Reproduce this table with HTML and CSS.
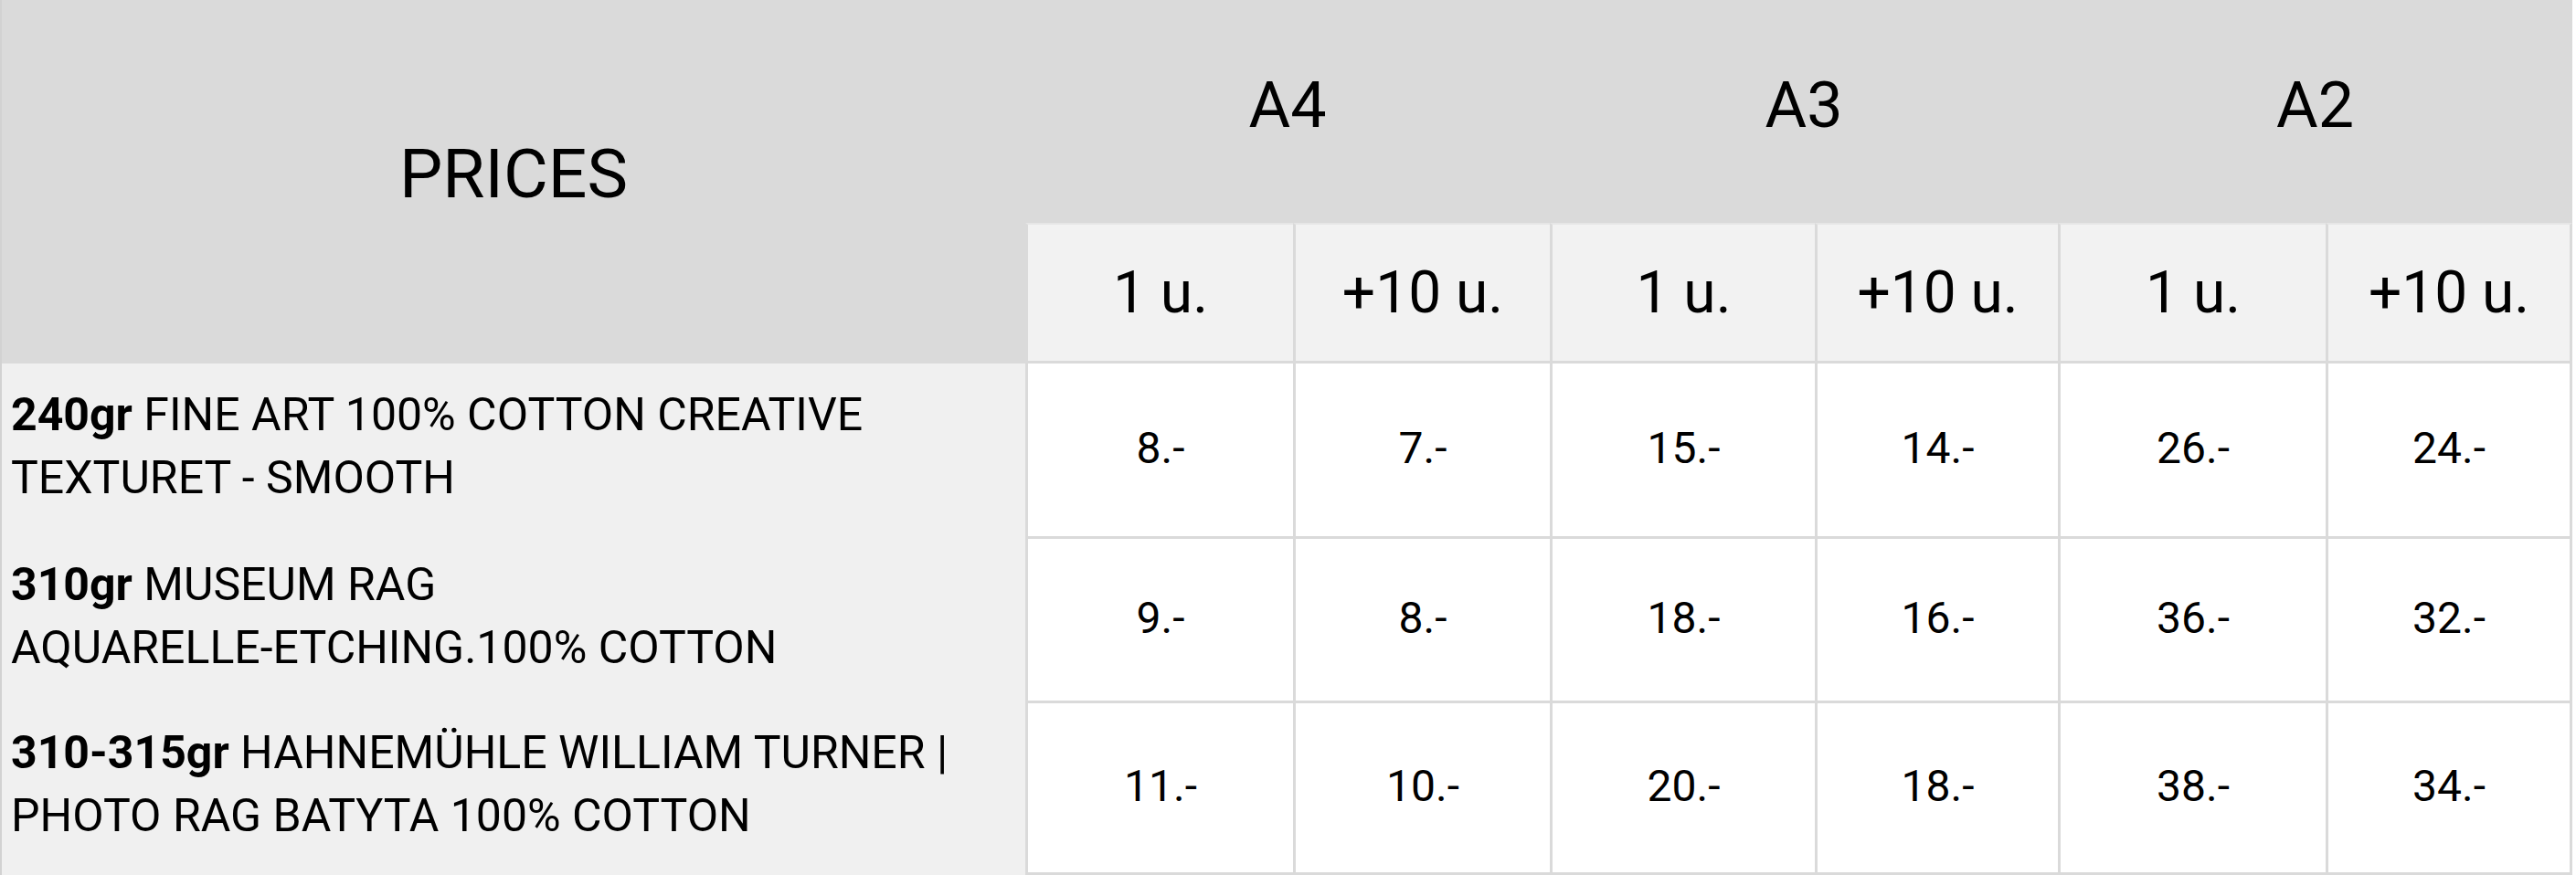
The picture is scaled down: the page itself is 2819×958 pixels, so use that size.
FILE: index.html
```html
<!DOCTYPE html>
<html lang="en">
<head>
<meta charset="utf-8">
<title>Prices</title>
<link rel="stylesheet" href="styles.css">
</head>
<body>
<table class="prices">
  <colgroup>
    <col class="col-name">
    <col class="col-a4-1">
    <col class="col-a4-10">
    <col class="col-a3-1">
    <col class="col-a3-10">
    <col class="col-a2-1">
    <col class="col-a2-10">
  </colgroup>
  <thead>
    <tr class="row-size">
      <th class="title" rowspan="2">PRICES</th>
      <th class="size" colspan="2">A4</th>
      <th class="size" colspan="2">A3</th>
      <th class="size" colspan="2">A2</th>
    </tr>
    <tr class="row-qty">
      <th class="qty">1 u.</th>
      <th class="qty">+10 u.</th>
      <th class="qty">1 u.</th>
      <th class="qty">+10 u.</th>
      <th class="qty">1 u.</th>
      <th class="qty last">+10 u.</th>
    </tr>
  </thead>
  <tbody>
    <tr class="row-1">
      <td class="name"><b>240gr</b> FINE ART 100% COTTON CREATIVE TEXTURET - SMOOTH</td>
      <td class="price">8.-</td>
      <td class="price">7.-</td>
      <td class="price">15.-</td>
      <td class="price">14.-</td>
      <td class="price">26.-</td>
      <td class="price last">24.-</td>
    </tr>
    <tr class="row-2">
      <td class="name"><b>310gr</b> MUSEUM RAG <span class="nowrap">AQUARELLE-ETCHING.100% COTTON</span></td>
      <td class="price">9.-</td>
      <td class="price">8.-</td>
      <td class="price">18.-</td>
      <td class="price">16.-</td>
      <td class="price">36.-</td>
      <td class="price last">32.-</td>
    </tr>
    <tr class="row-3">
      <td class="name"><b>310-315gr</b> HAHNEMÜHLE WILLIAM TURNER | PHOTO RAG BATYTA 100% COTTON</td>
      <td class="price">11.-</td>
      <td class="price">10.-</td>
      <td class="price">20.-</td>
      <td class="price">18.-</td>
      <td class="price">38.-</td>
      <td class="price last">34.-</td>
    </tr>
  </tbody>
</table>
</body>
</html>
```
FILE: styles.css
```css
html, body {
  margin: 0;
  padding: 0;
  background: #ffffff;
}

body {
  font-family: Roboto, "Liberation Sans", sans-serif;
  color: #000;
}

.prices {
  table-layout: fixed;
  width: 2815px;
  border-collapse: separate;
  border-spacing: 0;
}

.col-name { width: 1122px; }
.col-a4-1 { width: 293px; }
.col-a4-10 { width: 281px; }
.col-a3-1 { width: 290px; }
.col-a3-10 { width: 266px; }
.col-a2-1 { width: 293px; }
.col-a2-10 { width: 270px; }

.prices th,
.prices td {
  box-sizing: border-box;
  padding: 0;
  vertical-align: middle;
  text-align: center;
  font-weight: 400;
}

.prices .title {
  background: #dadada;
  font-size: 75px;
  padding-bottom: 19px;
  border-left: 2px solid #d2d2d2;
}

.prices .size {
  background: #dadada;
  font-size: 70px;
  padding-bottom: 15px;
}

.row-size { height: 244px; }
.row-qty { height: 154px; }
.row-1 { height: 192px; }
.row-2 { height: 180px; }
.row-3 { height: 188px; }

.prices .qty {
  background: #f2f2f2;
  font-size: 64px;
  border-left: 3px solid #dadada;
  border-bottom: 3px solid #dadada;
  border-top: 2px solid #e6e6e6;
}

.prices .name {
  background: #f0f0f0;
  text-align: left;
  font-size: 50px;
  line-height: 69px;
  padding: 0 10px 10px 10px;
  border-left: 2px solid #d2d2d2;
}

.prices .name b {
  font-weight: 700;
}

.nowrap {
  white-space: nowrap;
}

.prices .price {
  background: #ffffff;
  font-size: 48px;
  padding-bottom: 4px;
  border-left: 3px solid #dadada;
  border-bottom: 3px solid #dadada;
}

.prices .last {
  border-right: 3px solid #dadada;
}
```
